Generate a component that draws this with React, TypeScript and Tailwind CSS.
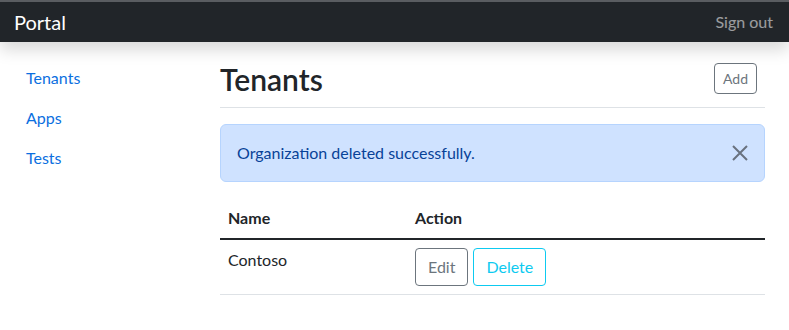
const font = { fontFamily: '"Segoe UI", Lato, "Liberation Sans", sans-serif' };

const SideLink = ({ label }: { label: string }) => (
  <a href="#" className="block px-4 py-2 leading-6 text-[#0b6fe0]">
    {label}
  </a>
);

const App = () => {
  return (
    <div className="min-h-[330px] bg-white text-[16px] text-[#212529]" style={font}>
      {/* Navbar */}
      <header className="relative z-10 bg-[#212529] border-t-2 border-[#5a5d61] shadow-[0_8px_16px_rgba(0,0,0,0.15)]">
        <div className="flex h-[40px] items-center justify-between px-4">
          <a href="#" className="text-[20px] leading-none text-white -ml-[2px]">
            Portal
          </a>
          <a href="#" className="text-[16px] text-white/55">
            Sign out
          </a>
        </div>
      </header>

      <div className="flex">
        {/* Sidebar */}
        <nav className="w-[205px] shrink-0 pl-[10px] pt-4">
          <SideLink label="Tenants" />
          <SideLink label="Apps" />
          <SideLink label="Tests" />
        </nav>

        {/* Main */}
        <main className="flex-1 pl-[15px] pr-[24px]">
          <div className="flex h-[66px] items-center justify-between border-b border-[#dee2e6] pt-4 pb-2">
            <h2 className="text-[30px] font-semibold leading-[1.2]">Tenants</h2>
            <button className="mr-[8px] h-[31px] rounded-[4px] border border-[#6c757d] px-2 text-[14px] text-[#6c757d]">
              Add
            </button>
          </div>

          <div className="mt-4 flex items-center justify-between rounded-[6px] border border-[#b6d4fe] bg-[#cfe2ff] p-4 text-[#084298]">
            <span className="leading-6">Organization deleted successfully.</span>
            <button className="text-[#69727f]" aria-label="Close">
              <svg width="16" height="16" viewBox="0 0 16 16" fill="none">
                <path d="M1 1L15 15M15 1L1 15" stroke="currentColor" strokeWidth="2" />
              </svg>
            </button>
          </div>

          <table className="mt-4 w-full border-collapse text-left">
            <thead>
              <tr className="border-b-2 border-[#212529]">
                <th className="w-[187px] p-2 font-bold leading-6">Name</th>
                <th className="p-2 font-bold leading-6">Action</th>
              </tr>
            </thead>
            <tbody>
              <tr className="border-b border-[#dee2e6]">
                <td className="p-2 align-top leading-6">Contoso</td>
                <td className="p-2 align-top">
                  <div className="flex gap-[5px]">
                    <button className="h-[38px] rounded-[4px] border border-[#6c757d] px-3 text-[#6c757d]">
                      Edit
                    </button>
                    <button className="h-[38px] rounded-[4px] border border-[#0dcaf0] px-3 text-[#0dcaf0]">
                      Delete
                    </button>
                  </div>
                </td>
              </tr>
            </tbody>
          </table>
        </main>
      </div>
    </div>
  );
};

export default App;
